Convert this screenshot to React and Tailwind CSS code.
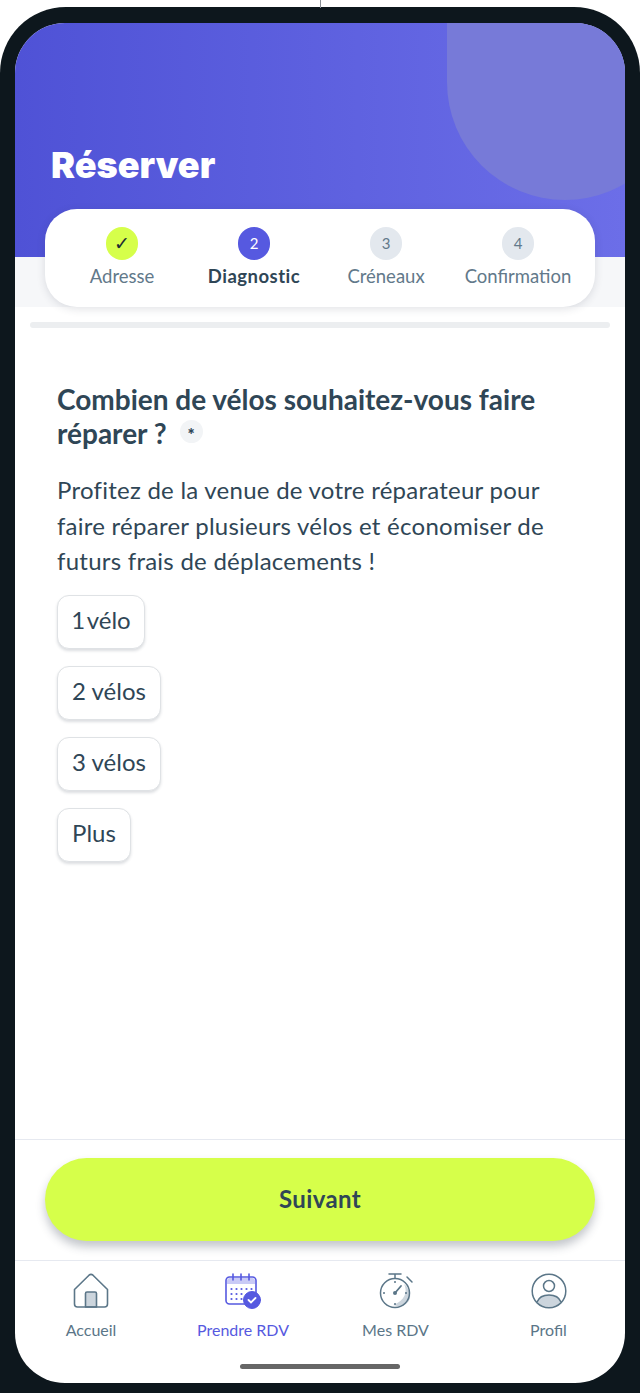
const STEPS = [
  { label: 'Adresse', mark: '✓', circle: 'bg-[#d6ff4a] text-[#1c2b33] text-[19px]', text: 'text-[#62798a]' },
  { label: 'Diagnostic', mark: '2', circle: 'bg-[#5659e0] text-white text-[15px]', text: 'text-[#2f4656] font-bold tracking-[0.5px]' },
  { label: 'Créneaux', mark: '3', circle: 'bg-[#e3e8ee] text-[#62798a] text-[15px]', text: 'text-[#62798a]' },
  { label: 'Confirmation', mark: '4', circle: 'bg-[#e3e8ee] text-[#62798a] text-[15px]', text: 'text-[#62798a]' },
]

const OPTIONS = [
  { label: '1 vélo', style: 'w-[88px] [word-spacing:-4px]' },
  { label: '2 vélos', style: 'w-[104px]' },
  { label: '3 vélos', style: 'w-[104px]' },
  { label: 'Plus', style: 'w-[74px]' },
]

function HomeIcon() {
  return (
    <svg width="36" height="36" viewBox="0 0 36 36" fill="none" stroke="#5b7688" strokeWidth="1.6" strokeLinejoin="round">
      <path d="M12.500 34V20.500a1.500 1.500 0 0 1 1.500-1.500h8a1.500 1.500 0 0 1 1.500 1.500V34z" fill="#ccd5dd" />
      <path d="M1.500 16.500L16 2.200a3 3 0 0 1 4 0L34.500 16.500v14.500a3 3 0 0 1-3 3h-27a3 3 0 0 1-3-3z" />
    </svg>
  )
}

function CalendarIcon() {
  return (
    <svg width="36" height="36" viewBox="0 0 36 36" fill="none" stroke="#5659e0" strokeWidth="1.6" strokeLinecap="round">
      <path d="M2 11h28V8a3 3 0 0 0-3-3H5a3 3 0 0 0-3 3z" fill="#c9caf6" stroke="none" />
      <rect x="1" y="4" width="30" height="27" rx="3.500" />
      <path d="M8 1v6M16 1v6M24 1v6" />
      <g fill="#5659e0" stroke="none">
        <circle cx="6.500" cy="16" r="1.100" /><circle cx="11.500" cy="16" r="1.100" /><circle cx="16.500" cy="16" r="1.100" /><circle cx="21.500" cy="16" r="1.100" /><circle cx="26.500" cy="16" r="1.100" />
        <circle cx="6.500" cy="21" r="1.100" /><circle cx="11.500" cy="21" r="1.100" /><circle cx="16.500" cy="21" r="1.100" />
        <circle cx="6.500" cy="26" r="1.100" /><circle cx="11.500" cy="26" r="1.100" /><circle cx="16.500" cy="26" r="1.100" />
      </g>
      <circle cx="27" cy="27" r="8.500" fill="#5659e0" stroke="#5659e0" strokeWidth="1" />
      <path d="M23.500 27l2.500 2.500 4.500-4.500" stroke="#fff" strokeWidth="1.800" />
    </svg>
  )
}

function TimerIcon() {
  return (
    <svg width="36" height="36" viewBox="0 0 36 36" fill="none" stroke="#5b7688" strokeWidth="1.500" strokeLinecap="round">
      <path d="M26 11c4 7 1 17-11 21 8 3 15 0 17-7 1-5-2-11-6-14z" fill="#ccd5dd" stroke="none" />
      <circle cx="17" cy="20" r="14.500" />
      <path d="M11 1h12M17 1v4M29 4l5 5" />
      <path d="M17 20l6-7" strokeWidth="1.800" />
      <circle cx="17" cy="20" r="2" fill="#5b7688" stroke="none" />
      <g fill="#5b7688" stroke="none">
        <circle cx="17" cy="9" r="1" /><circle cx="17" cy="31" r="1" /><circle cx="6" cy="20" r="1" /><circle cx="28" cy="20" r="1" />
      </g>
    </svg>
  )
}

function ProfileIcon() {
  return (
    <svg width="36" height="36" viewBox="0 0 36 36" fill="none" stroke="#5b7688" strokeWidth="1.500">
      <path d="M6 29c2-5 7-7 12-7s10 2 12 7a17 17 0 0 1-24 0z" fill="#ccd5dd" stroke="none" />
      <path d="M6 29c2-5 7-7 12-7s10 2 12 7" />
      <circle cx="18" cy="18" r="16.800" />
      <circle cx="18" cy="13" r="5.500" />
    </svg>
  )
}

const TABS = [
  { label: 'Accueil', icon: <HomeIcon />, active: false, width: 'w-[152px]' },
  { label: 'Prendre RDV', icon: <CalendarIcon />, active: true, width: 'w-[152px]' },
  { label: 'Mes RDV', icon: <TimerIcon />, active: false, width: 'w-[153px]' },
  { label: 'Profil', icon: <ProfileIcon />, active: false, width: 'w-[153px]' },
]

export default function App() {
  return (
    <div className="relative w-[640px] h-[1393px] overflow-hidden bg-white font-['Lato',sans-serif]">
      {/* Fil au dessus du téléphone */}
      <div className="absolute left-[320px] top-0 h-[8px] w-px bg-[#8a8f96]" />

      {/* Cadre du téléphone */}
      <div className="mt-[7px] h-[1386px] rounded-t-[66px] bg-[#0d171d] pt-[16px] px-[15px]">
        <div className="flex h-[1360px] flex-col overflow-hidden rounded-[50px] bg-white">

          {/* Header */}
          <div className="relative h-[234px] shrink-0 overflow-hidden bg-gradient-to-r from-[#4f52d6] to-[#6c6ee8]">
            <div className="absolute left-[432px] top-[-123px] h-[300px] w-[236px] rounded-full bg-[#777ad8]" />
            <h1 className="absolute left-[36px] top-[120px] text-[36px] leading-[44px] font-black text-white font-['Inter',sans-serif]">
              Réserver
            </h1>
          </div>

          {/* Stepper */}
          <div className="relative h-[50px] shrink-0 bg-[#f6f7f9]">
            <div className="absolute left-[30px] top-[-48px] flex h-[98px] w-[550px] items-start justify-between rounded-[32px] bg-white px-[11px] pt-[18px] shadow-[0_2px_8px_rgba(40,50,70,0.14)]">
              {STEPS.map((step) => (
                <div key={step.label} className="flex w-[132px] flex-col items-center">
                  <div className={`flex h-[33px] w-[32px] items-center justify-center rounded-full ${step.circle}`}>
                    {step.mark}
                  </div>
                  <span className={`mt-[5px] text-[18.500px] leading-[22px] ${step.text}`}>{step.label}</span>
                </div>
              ))}
            </div>
          </div>

          {/* Barre de progression */}
          <div className="mx-[15px] mt-[15px] h-[6px] shrink-0 rounded-full bg-[#eceef0]" />

          {/* Contenu */}
          <div className="flex-1 px-[42px] pt-[54px] text-[#2f4656]">
            <h2 className="text-[28px] leading-[34px] font-bold">
              Combien de vélos souhaitez-vous faire réparer ?
              <span className="ml-[13px] inline-flex h-[23px] w-[23px] items-center justify-center rounded-full bg-[#f2f4f6] pt-[6px] align-[3px] text-[17px] leading-none font-black">*</span>
            </h2>
            <p className="mt-[22px] max-w-[500px] text-[24px] leading-[35.500px] tracking-[0.25px]">
              Profitez de la venue de votre réparateur pour faire réparer plusieurs vélos et économiser de futurs frais de déplacements !
            </p>
            <div className="mt-[16px] flex flex-col items-start gap-[17px]">
              {OPTIONS.map((opt) => (
                <button key={opt.label} className={`h-[54px] rounded-[12px] border border-[#dfe2e5] bg-white pb-[3px] text-[24px] shadow-[0_2px_3px_rgba(40,50,70,0.16)] ${opt.style}`}>
                  {opt.label}
                </button>
              ))}
            </div>
          </div>

          {/* Bouton suivant */}
          <div className="h-[121px] shrink-0 border-t border-[#e6e9f0] px-[30px] pt-[18px]">
            <button className="h-[83px] w-full rounded-[42px] bg-[#d6ff4a] pb-[2px] text-[24px] tracking-[0.4px] font-bold text-[#2f4656] shadow-[0_6px_10px_rgba(40,50,70,0.28)]">
              Suivant
            </button>
          </div>

          {/* Tab bar */}
          <nav className="relative h-[123px] shrink-0 border-t border-[#e6e9f0]">
            <div className="flex pt-[12px]">
              {TABS.map((tab) => (
                <div key={tab.label} className={`flex flex-col items-center ${tab.width}`}>
                  {tab.icon}
                  <span className={`mt-[11px] text-[16px] leading-[20px] ${tab.active ? 'text-[#5659e0]' : 'text-[#5b7688]'}`}>{tab.label}</span>
                </div>
              ))}
            </div>
            <div className="absolute bottom-[14px] left-[225px] h-[5px] w-[160px] rounded-full bg-[#666]" />
          </nav>
        </div>
      </div>
    </div>
  )
}
